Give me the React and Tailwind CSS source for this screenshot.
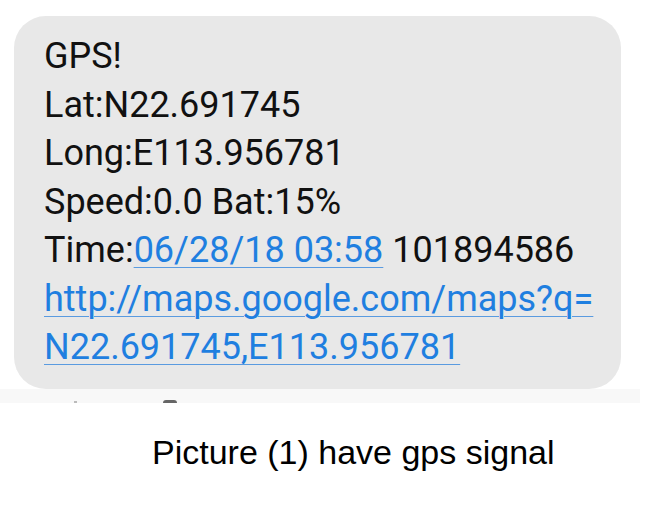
export default function App() {
  const link = "text-[#1f7fe0] underline decoration-[#5a9be0] decoration-1 underline-offset-[5px]";
  return (
    <div className="w-[670px] h-[516px] bg-white overflow-hidden relative">
      <div className="pt-[16px] pl-[14px]">
        <div
          className="w-[607px] h-[373px] rounded-[32px] bg-[#e8e8e8] pl-[30px] pt-[16px] text-[36px] leading-[48.5px] text-[#111]"
          style={{ fontFamily: "Roboto, 'Liberation Sans', sans-serif" }}
        >
          <div>GPS!</div>
          <div>Lat:N22.691745</div>
          <div>Long:E113.956781</div>
          <div>Speed:0.0 Bat:15%</div>
          <div className="whitespace-nowrap">
            Time:<span className={link}>06/28/18 03:58</span> 101894586
          </div>
          <div className={`${link} whitespace-nowrap`}>http://maps.google.com/maps?q=</div>
          <div>
            <span className={link}>N22.691745,E113.956781</span>
          </div>
        </div>
      </div>
      <div className="h-[14px] w-[640px] bg-[#f8f8f8] relative">
        <div className="absolute left-[163px] top-[11px] w-[14px] h-[3px] rounded-t bg-[#666]" />
        <div className="absolute left-[74px] top-[12px] w-[3px] h-[2px] bg-[#bbb]" />
      </div>
      <div
        className="pl-[152px] pt-[31px] text-[34px] leading-[36px] text-black whitespace-nowrap"
        style={{ fontFamily: "'Liberation Sans', Arial, sans-serif" }}
      >
        Picture (1) have gps signal
      </div>
    </div>
  );
}
